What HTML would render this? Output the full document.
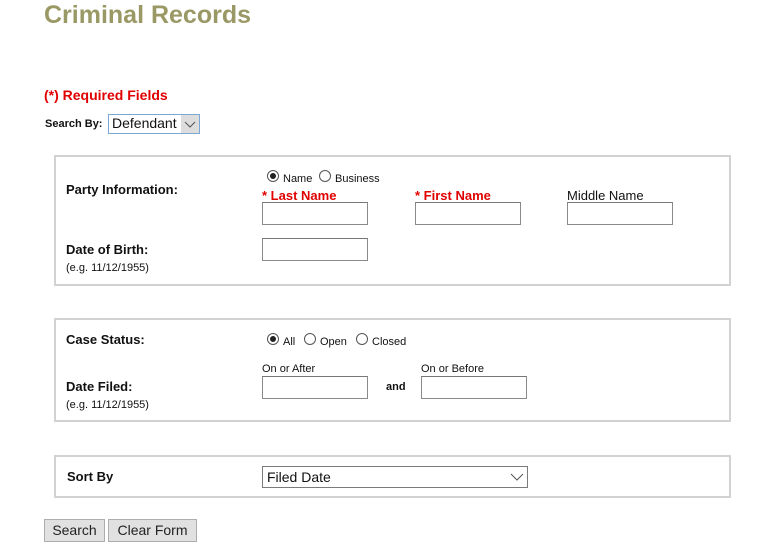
<!DOCTYPE html><html><head><style>
body{margin:0;width:768px;height:552px;background:#fff;font-family:"Liberation Sans",Arial,sans-serif;position:relative;overflow:hidden;color:#111}
.a{position:absolute;white-space:nowrap}
.b{font-weight:bold;font-size:13px}
.s{font-size:11px}
.box{position:absolute;left:54px;width:673px;border:2px solid #d2d2d2}
.in{position:absolute;border:1px solid #8a8a8a;border-top-color:#777;background:#fff;box-sizing:border-box;height:23px;width:106px}
.r{position:absolute;width:12px;height:12px;border:1px solid #555;border-radius:50%;box-sizing:border-box;background:#fff}
.r.on::after{content:"";position:absolute;left:2px;top:2px;width:6px;height:6px;border-radius:50%;background:#222}
.red{color:#e00000;font-weight:bold;font-size:13px}
.btn{position:absolute;height:23px;border:1px solid #adadad;background:#e1e1e1;font-size:14px;text-align:center;line-height:21px;box-sizing:border-box;color:#222}
</style></head><body>
<div class="a" style="left:44px;top:1px;font-size:25px;font-weight:bold;color:#9a9966">Criminal Records</div>
<div class="a" style="left:44px;top:87px;color:#e00000;font-weight:bold;font-size:14px">(*) Required Fields</div>
<div class="a b" style="left:45px;top:118px;font-size:11px">Search By:</div>
<div class="a" style="left:108px;top:114px;width:92px;height:20px;border:1px solid #7aa7d6;box-sizing:border-box;font-size:14px;line-height:17px;padding-left:3px;background:#fff">Defendant<span style="position:absolute;right:0;top:0;width:18px;height:18px;background:#ddd"><svg width="18" height="18" style="position:absolute;left:0;top:0"><path d="M4 7 L9 12 L14 7" fill="none" stroke="#555" stroke-width="1"/></svg></span></div>

<div class="box" style="top:155px;height:127px"></div>
<div class="a b" style="left:66px;top:182px">Party Information:</div>
<div class="r on" style="left:267px;top:170px"></div><div class="a s" style="left:283px;top:173px">Name</div>
<div class="r" style="left:319px;top:170px"></div><div class="a s" style="left:335px;top:173px">Business</div>
<div class="a red" style="left:262px;top:188px">* Last Name</div>
<div class="a red" style="left:415px;top:188px">* First Name</div>
<div class="a" style="left:567px;top:188px;font-size:13px">Middle Name</div>
<div class="in" style="left:262px;top:202px"></div>
<div class="in" style="left:415px;top:202px"></div>
<div class="in" style="left:567px;top:202px"></div>
<div class="a b" style="left:66px;top:242px">Date of Birth:</div>
<div class="a s" style="left:66px;top:262px">(e.g. 11/12/1955)</div>
<div class="in" style="left:262px;top:238px"></div>

<div class="box" style="top:318px;height:100px"></div>
<div class="a b" style="left:66px;top:332px">Case Status:</div>
<div class="r on" style="left:267px;top:333px"></div><div class="a s" style="left:283px;top:336px">All</div>
<div class="r" style="left:304px;top:333px"></div><div class="a s" style="left:320px;top:336px">Open</div>
<div class="r" style="left:356px;top:333px"></div><div class="a s" style="left:372px;top:336px">Closed</div>
<div class="a s" style="left:262px;top:363px">On or After</div>
<div class="a s" style="left:421px;top:363px">On or Before</div>
<div class="in" style="left:262px;top:376px"></div>
<div class="a s" style="left:386px;top:381px;font-weight:bold">and</div>
<div class="in" style="left:421px;top:376px"></div>
<div class="a b" style="left:66px;top:379px">Date Filed:</div>
<div class="a s" style="left:66px;top:399px">(e.g. 11/12/1955)</div>

<div class="box" style="top:455px;height:39px"></div>
<div class="a b" style="left:67px;top:469px">Sort By</div>
<div class="a" style="left:262px;top:466px;width:266px;height:22px;border:1px solid #7a7a7a;box-sizing:border-box;font-size:14px;line-height:20px;padding-left:4px;background:#fff">Filed Date<svg width="16" height="20" style="position:absolute;right:2px;top:0"><path d="M2 7 L8 13 L14 7" fill="none" stroke="#555" stroke-width="1"/></svg></div>

<div class="btn" style="left:44px;top:519px;width:61px">Search</div>
<div class="btn" style="left:108px;top:519px;width:89px">Clear Form</div>
</body></html>
